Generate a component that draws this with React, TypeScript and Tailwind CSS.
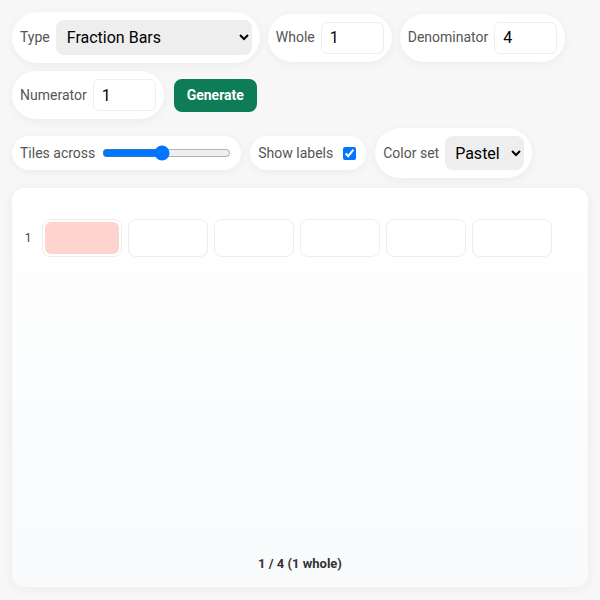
import React from "react";

const pill = "flex items-center gap-1.5 bg-white rounded-full shadow-[0_2px_10px_rgba(0,0,0,0.05)] pl-2 pr-2 py-2";
const label = "text-[14px] text-[#555]";
const input = "w-[63px] h-[32px] border border-[#eee] rounded-md px-2 text-[16px] text-black bg-white";

export default function App() {
  const tiles = [0, 1, 2, 3, 4, 5];
  return (
    <div className="min-h-[600px] bg-[#f7f7f7] p-3 flex flex-col gap-2 font-['Roboto',sans-serif]">
      <div className="flex flex-wrap gap-x-2 gap-y-[9px] items-center">
        <div className={pill}>
          <span className={label}>Type</span>
          <select defaultValue="bars" className="w-[196px] h-[35px] bg-[#eeeeee] rounded-lg pl-[7px] pr-[6px] text-[16px] text-black">
            <option value="bars">Fraction Bars</option>
          </select>
        </div>
        <div className={pill}>
          <span className={label}>Whole</span>
          <input className={input} defaultValue="1" />
        </div>
        <div className={pill}>
          <span className={label}>Denominator</span>
          <input className={input} defaultValue="4" />
        </div>
      </div>
      <div className="flex flex-wrap gap-2.5 items-center">
        <div className={pill}>
          <span className={label}>Numerator</span>
          <input className={input} defaultValue="1" />
        </div>
        <button className="h-[33px] px-[13px] rounded-lg bg-[#0e7c57] text-white font-bold text-[14px]">Generate</button>
      </div>
      <div className="flex flex-wrap gap-[9px] items-center mt-[1px]">
        <div className="flex items-center gap-1.5 bg-white rounded-full shadow-[0_2px_10px_rgba(0,0,0,0.05)] pl-2 pr-2.5 py-2 h-[34px]">
          <span className={label}>Tiles across</span>
          <input type="range" min={1} max={12} defaultValue={6} className="w-[129px] ml-[1px]" />
        </div>
        <div className="flex items-center gap-1.5 bg-white rounded-full shadow-[0_2px_10px_rgba(0,0,0,0.05)] pl-2 pr-[6px] py-2 h-[34px]">
          <span className={label}>Show labels</span>
          <input type="checkbox" defaultChecked className="w-[13px] h-[13px] mx-1" />
        </div>
        <div className={pill}>
          <span className={label}>Color set</span>
          <select defaultValue="pastel" className="h-[34px] w-[79px] bg-[#eeeeee] rounded-lg pl-[6px] pr-1 text-[16px] text-black">
            <option value="pastel">Pastel</option>
          </select>
        </div>
      </div>
      <div className="h-[399px] rounded-xl bg-gradient-to-b from-white to-[#f8fafc] shadow-[0_2px_12px_rgba(0,0,0,0.05)] flex flex-col mt-[2px]">
        <div className="flex items-center pt-[31px] pl-[2px]">
          <span className="w-[28px] text-[12px] text-[#444] text-center">1</span>
          <div className="flex gap-[6px]">
            {tiles.map((i) => (
              <div key={i} className="w-[80px] h-[38px] rounded-lg border border-[#eee] bg-white p-[2px]">
                {i === 0 && <div className="w-full h-full rounded-md bg-[#ffd4ce]" />}
              </div>
            ))}
          </div>
        </div>
        <div className="mt-auto pb-[14px] text-center text-[13px] font-bold text-[#333]">1 / 4 (1 whole)</div>
      </div>
    </div>
  );
}
